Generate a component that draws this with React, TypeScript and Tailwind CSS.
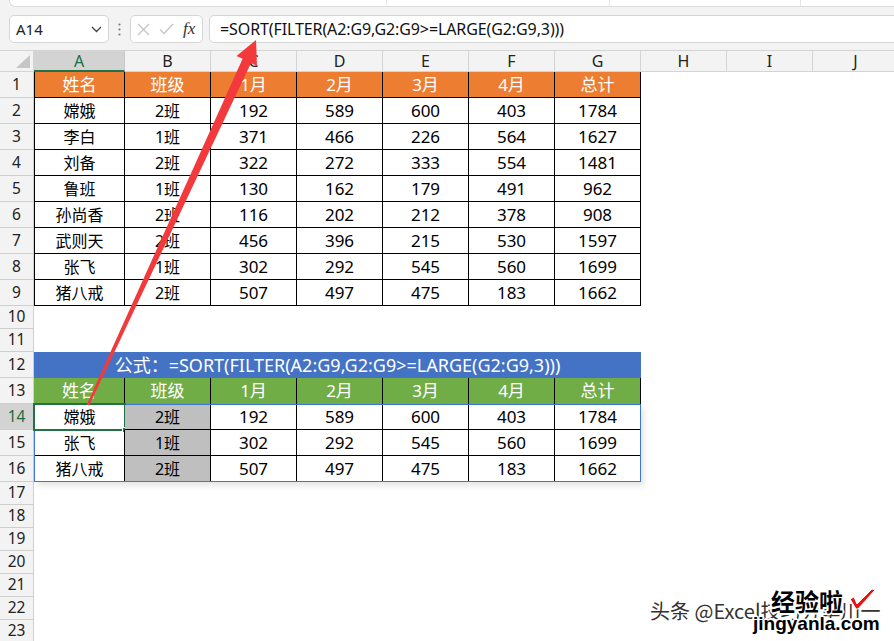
import React from "react";

const header = ["姓名", "班级", "1月", "2月", "3月", "4月", "总计"];
const data: string[][] = [
  ["嫦娥", "2班", "192", "589", "600", "403", "1784"],
  ["李白", "1班", "371", "466", "226", "564", "1627"],
  ["刘备", "2班", "322", "272", "333", "554", "1481"],
  ["鲁班", "1班", "130", "162", "179", "491", "962"],
  ["孙尚香", "2班", "116", "202", "212", "378", "908"],
  ["武则天", "2班", "456", "396", "215", "530", "1597"],
  ["张飞", "1班", "302", "292", "545", "560", "1699"],
  ["猪八戒", "2班", "507", "497", "475", "183", "1662"],
];
const result: string[][] = [
  ["嫦娥", "2班", "192", "589", "600", "403", "1784"],
  ["张飞", "1班", "302", "292", "545", "560", "1699"],
  ["猪八戒", "2班", "507", "497", "475", "183", "1662"],
];

const colLetters = ["A", "B", "C", "D", "E", "F", "G", "H", "I", "J"];

const rowHeights: { n: number; h: string }[] = [
  ...Array.from({ length: 9 }, (_, i) => ({ n: i + 1, h: "h-[26px]" })),
  { n: 10, h: "h-[23px]" },
  { n: 11, h: "h-[23px]" },
  ...Array.from({ length: 5 }, (_, i) => ({ n: i + 12, h: "h-[26px]" })),
  ...Array.from({ length: 7 }, (_, i) => ({ n: i + 17, h: "h-[23px]" })),
];

const cellFont = "font-['Noto_Sans','Noto_Sans_CJK_SC',sans-serif]";
const outline =
  "[text-shadow:1px_1px_0_#fff,-1px_-1px_0_#fff,1px_-1px_0_#fff,-1px_1px_0_#fff,2px_0_0_#fff,-2px_0_0_#fff,0_2px_0_#fff,0_-2px_0_#fff]";

export default function App() {
  return (
    <div className={`relative w-[894px] h-[641px] overflow-hidden bg-white ${cellFont}`}>
      {/* toolbar */}
      <div className="h-[50px] bg-[#f3f3f3] flex flex-col overflow-hidden">
        <div className="h-[7px] ml-[9px] bg-white border-b border-l border-[#dcdcdc] rounded-bl-md flex shrink-0">
          <div className="w-[377px] shrink-0 border-r border-[#e6e6e6]" />
          <div className="w-[223px] shrink-0 border-r border-[#e6e6e6]" />
          <div className="w-[191px] shrink-0 border-r border-[#e6e6e6]" />
        </div>
        <div className="mt-[8px] flex items-center h-[28px] shrink-0">
          <div className="ml-[9px] shrink-0 w-[100px] h-[28px] bg-white border border-[#d6d6d6] rounded-[5px] flex items-center pl-[6px] pr-[6px] justify-between">
            <span className="text-[15px] text-[#222] leading-none">A14</span>
            <svg width="11" height="7" viewBox="0 0 11 7">
              <path d="M1 1 L5.5 5.5 L10 1" fill="none" stroke="#444" strokeWidth="1.3" />
            </svg>
          </div>
          <div className="w-[21px] shrink-0 flex justify-center">
            <svg width="3" height="13" viewBox="0 0 3 13">
              <circle cx="1.5" cy="1.5" r="1.1" fill="#7a7a7a" />
              <circle cx="1.5" cy="6.5" r="1.1" fill="#7a7a7a" />
              <circle cx="1.5" cy="11.5" r="1.1" fill="#7a7a7a" />
            </svg>
          </div>
          <div className="w-[73px] shrink-0 h-[28px] bg-white border border-[#d6d6d6] rounded-[5px] flex items-center pl-[6px] gap-[9px]">
            <svg width="13" height="13" viewBox="0 0 13 13">
              <path d="M1 1 L12 12 M12 1 L1 12" stroke="#c4c4c4" strokeWidth="1.3" />
            </svg>
            <svg width="15" height="12" viewBox="0 0 15 12">
              <path d="M1 6.5 L5 10.5 L14 1" fill="none" stroke="#c4c4c4" strokeWidth="1.3" />
            </svg>
            <span className="font-['Liberation_Serif',serif] italic text-[17px] text-[#333] leading-none -mt-[2px]">fx</span>
          </div>
          <div className="ml-[6px] shrink-0 w-[720px] h-[28px] bg-white border border-[#d6d6d6] rounded-[5px] flex items-center pl-[10px]">
            <span className="text-[16px] text-[#111] leading-none tracking-[-0.1px]">=SORT(FILTER(A2:G9,G2:G9&gt;=LARGE(G2:G9,3)))</span>
          </div>
        </div>
      </div>

      {/* column headers */}
      <div className="flex h-[22px]">
        <div className="w-[34px] shrink-0 bg-[#f3f3f3] border-r border-b border-t border-[#d4d4d4] flex items-end justify-end pr-[3px] pb-[3px]">
          <svg width="14" height="13" viewBox="0 0 14 13">
            <path d="M14 0 L14 13 L0 13 Z" fill="#c6c6c6" />
          </svg>
        </div>
        {colLetters.map((c, i) =>
          i === 0 ? (
            <div
              key={c}
              className="w-[91px] shrink-0 bg-[#d3d3d3] border-t border-[#d4d4d4] border-r border-r-[#c8c8c8] border-b-2 border-b-[#217346] flex items-center justify-center text-[16px] text-[#1d6b40]"
            >
              {c}
            </div>
          ) : (
            <div
              key={c}
              className="w-[86px] shrink-0 bg-[#f3f3f3] border-t border-r border-b border-[#d4d4d4] flex items-center justify-center text-[16px] text-[#222]"
            >
              {c}
            </div>
          )
        )}
      </div>

      {/* body */}
      <div className="flex">
        {/* row headers */}
        <div className="w-[34px] shrink-0 flex flex-col">
          {rowHeights.map((r) => (
            <div
              key={r.n}
              className={`${r.h} shrink-0 border-b border-r border-[#cfcfcf] flex items-center justify-center text-[15.5px] ${
                r.n === 14 ? "bg-[#d3d3d3] text-[#1d6b40]" : "bg-[#f3f3f3] text-[#222]"
              }`}
            >
              {r.n}
            </div>
          ))}
        </div>

        {/* cells */}
        <div className="flex flex-col text-[17px] text-black">
          {/* table 1 */}
          <div className="flex flex-col w-[607px]">
            <div className="flex h-[26px]">
              {header.map((t, i) => (
                <div
                  key={t}
                  className={`${i === 0 ? "w-[91px] border-l" : "w-[86px]"} h-[26px] bg-[#ed7d31] text-white border-r border-b border-black flex items-center justify-center`}
                >
                  {t}
                </div>
              ))}
            </div>
            {data.map((row, r) => (
              <div key={r} className="flex h-[26px]">
                {row.map((t, i) => (
                  <div
                    key={i}
                    className={`${i === 0 ? "w-[91px] border-l" : "w-[86px]"} h-[26px] border-r border-b border-black flex items-center justify-center ${
                      i === 0 || i === 1 ? "text-[16px]" : ""
                    }`}
                  >
                    {t}
                  </div>
                ))}
              </div>
            ))}
          </div>

          <div className="h-[46px]" />

          {/* row 12 */}
          <div className="w-[607px] h-[26px] bg-[#4472c4] text-white flex items-center justify-center text-[18px]">
            公式：=SORT(FILTER(A2:G9,G2:G9&gt;=LARGE(G2:G9,3)))
          </div>

          {/* row 13 */}
          <div className="flex h-[26px] w-[607px]">
            {header.map((t, i) => (
              <div
                key={t}
                className={`${i === 0 ? "w-[91px]" : "w-[86px]"} h-[26px] bg-[#70ad47] text-white border-r border-black flex items-center justify-center`}
              >
                {t}
              </div>
            ))}
          </div>

          {/* spill rows 14-16 */}
          <div className="w-[607px] border border-[#3b77d6] shadow-[3px_4px_6px_rgba(0,0,0,0.10)] flex flex-col">
            {result.map((row, r) => (
              <div key={r} className={`flex ${r === 1 ? "h-[26px]" : "h-[25px]"}`}>
                {row.map((t, i) => (
                  <div
                    key={i}
                    className={`relative ${i === 0 ? "w-[90px]" : i === 6 ? "w-[85px]" : "w-[86px]"} ${
                      i < 6 ? "border-r" : ""
                    } ${r < 2 ? "border-b" : ""} border-black flex items-center justify-center ${
                      i === 1 ? "bg-[#bfbfbf]" : ""
                    } ${i === 0 || i === 1 ? "text-[16px]" : ""}`}
                  >
                    {t}
                    {r === 0 && i === 0 && (
                      <div className="absolute -left-[2px] -top-[2px] w-[93px] h-[28px] border-2 border-[#217346]">
                        <div className="absolute -right-[4px] -bottom-[4px] w-[6px] h-[6px] bg-[#217346] border border-white" />
                      </div>
                    )}
                  </div>
                ))}
              </div>
            ))}
          </div>
        </div>
      </div>

      {/* red arrow */}
      <svg className="absolute left-0 top-0 pointer-events-none" width="894" height="641" viewBox="0 0 894 641">
        <polygon
          points="256,40 257,66 251,63 89.2,405.5 86.8,404.5 242.6,58.8 236.5,56"
          fill="#f23a3c"
        />
      </svg>

      {/* watermark */}
      <div className="absolute left-[650px] top-[597px] text-[20px] text-[#333] whitespace-nowrap font-['Noto_Sans_CJK_SC',sans-serif] leading-none pt-[4px] [text-shadow:1px_1px_0_#fff,-1px_-1px_0_#fff,1px_-1px_0_#fff,-1px_1px_0_#fff]">
        头条 @Excel技巧分享川一
      </div>
      <div className={`absolute left-[771px] top-[585px] text-[24px] font-bold text-black whitespace-nowrap font-['Noto_Sans_CJK_SC',sans-serif] leading-none pt-[4px] ${outline}`}>
        经验啦
      </div>
      <svg className="absolute left-[848px] top-[588px]" width="28" height="22" viewBox="0 0 28 22">
        <path d="M2 11 L6 9 L9 16 L24 1 L27 2 L10 21 L8 21 Z" fill="#ee1111" stroke="#fff" strokeWidth="1" />
      </svg>
      <div className={`absolute left-[753px] top-[614px] text-[19px] font-bold text-black whitespace-nowrap font-['Liberation_Sans',sans-serif] leading-none ${outline}`}>
        jingyanla.com
      </div>
    </div>
  );
}
